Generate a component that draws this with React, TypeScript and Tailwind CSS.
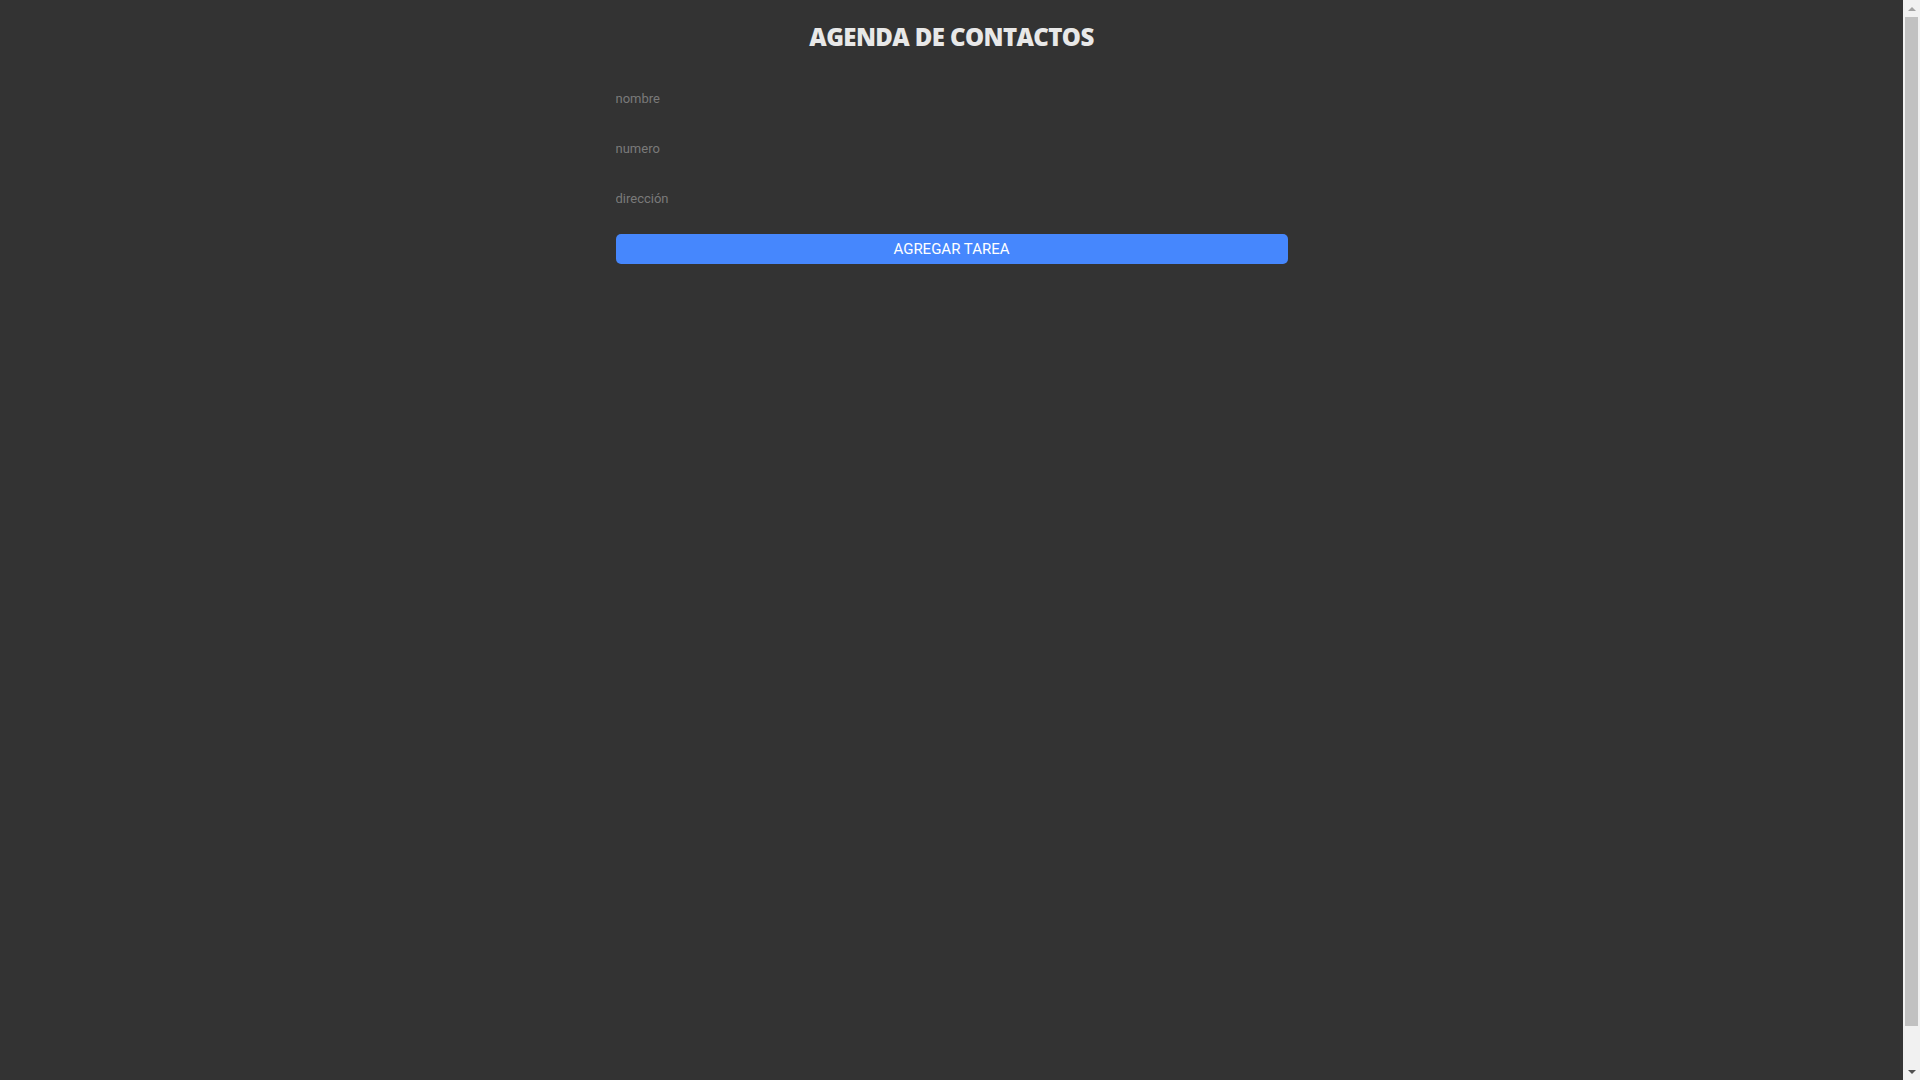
import { useState } from "react";

function FakeScrollbar() {
	return (
		<div className="w-[17px] h-full bg-[#f1f1f1] flex flex-col items-center">
			<div className="h-[17px] w-full flex items-center justify-center">
				<div className="w-0 h-0 border-l-[4px] border-r-[4px] border-b-[4px] border-l-transparent border-r-transparent border-b-[#a3a3a3]" />
			</div>
			<div className="flex-1 w-full px-[2px] pb-[37px]">
				<div className="h-full w-full bg-[#c1c1c1]" />
			</div>
			<div className="h-[17px] w-full flex items-center justify-center">
				<div className="w-0 h-0 border-l-[4px] border-r-[4px] border-t-[4px] border-l-transparent border-r-transparent border-t-[#505050]" />
			</div>
		</div>
	);
}

function App() {
	const [nombre, setNombre] = useState("");
	const [numero, setNumero] = useState("");
	const [direccion, setDireccion] = useState("");

	return (
		<div className="h-screen flex bg-[#333333] font-['Roboto',sans-serif]">
			<main className="flex-1">
				<div className="mx-auto w-[672px] pt-[21px] flex flex-col">
					<h1 className="text-center text-[24px] leading-[32px] font-extrabold tracking-[-0.6px] text-[#e8e8e8] font-['Open_Sans',sans-serif]">
						AGENDA DE CONTACTOS
					</h1>
					<form
						className="mt-[30px] flex flex-col gap-5"
						onSubmit={(e) => e.preventDefault()}
					>
						<input
							value={nombre}
							onChange={(e) => setNombre(e.target.value)}
							placeholder="nombre"
							className="h-[30px] bg-transparent text-[13px] text-[#cccccc] placeholder:text-[#7a7a7a] outline-none"
						/>
						<input
							value={numero}
							onChange={(e) => setNumero(e.target.value)}
							placeholder="numero"
							className="h-[30px] bg-transparent text-[13px] text-[#cccccc] placeholder:text-[#7a7a7a] outline-none"
						/>
						<input
							value={direccion}
							onChange={(e) => setDireccion(e.target.value)}
							placeholder="dirección"
							className="h-[30px] bg-transparent text-[13px] text-[#cccccc] placeholder:text-[#7a7a7a] outline-none"
						/>
						<button
							type="submit"
							className="mt-px h-[30px] rounded-[5px] bg-[#4687fd] text-[15px] text-white"
						>
							AGREGAR TAREA
						</button>
					</form>
				</div>
			</main>
			<FakeScrollbar />
		</div>
	);
}
export default App;
